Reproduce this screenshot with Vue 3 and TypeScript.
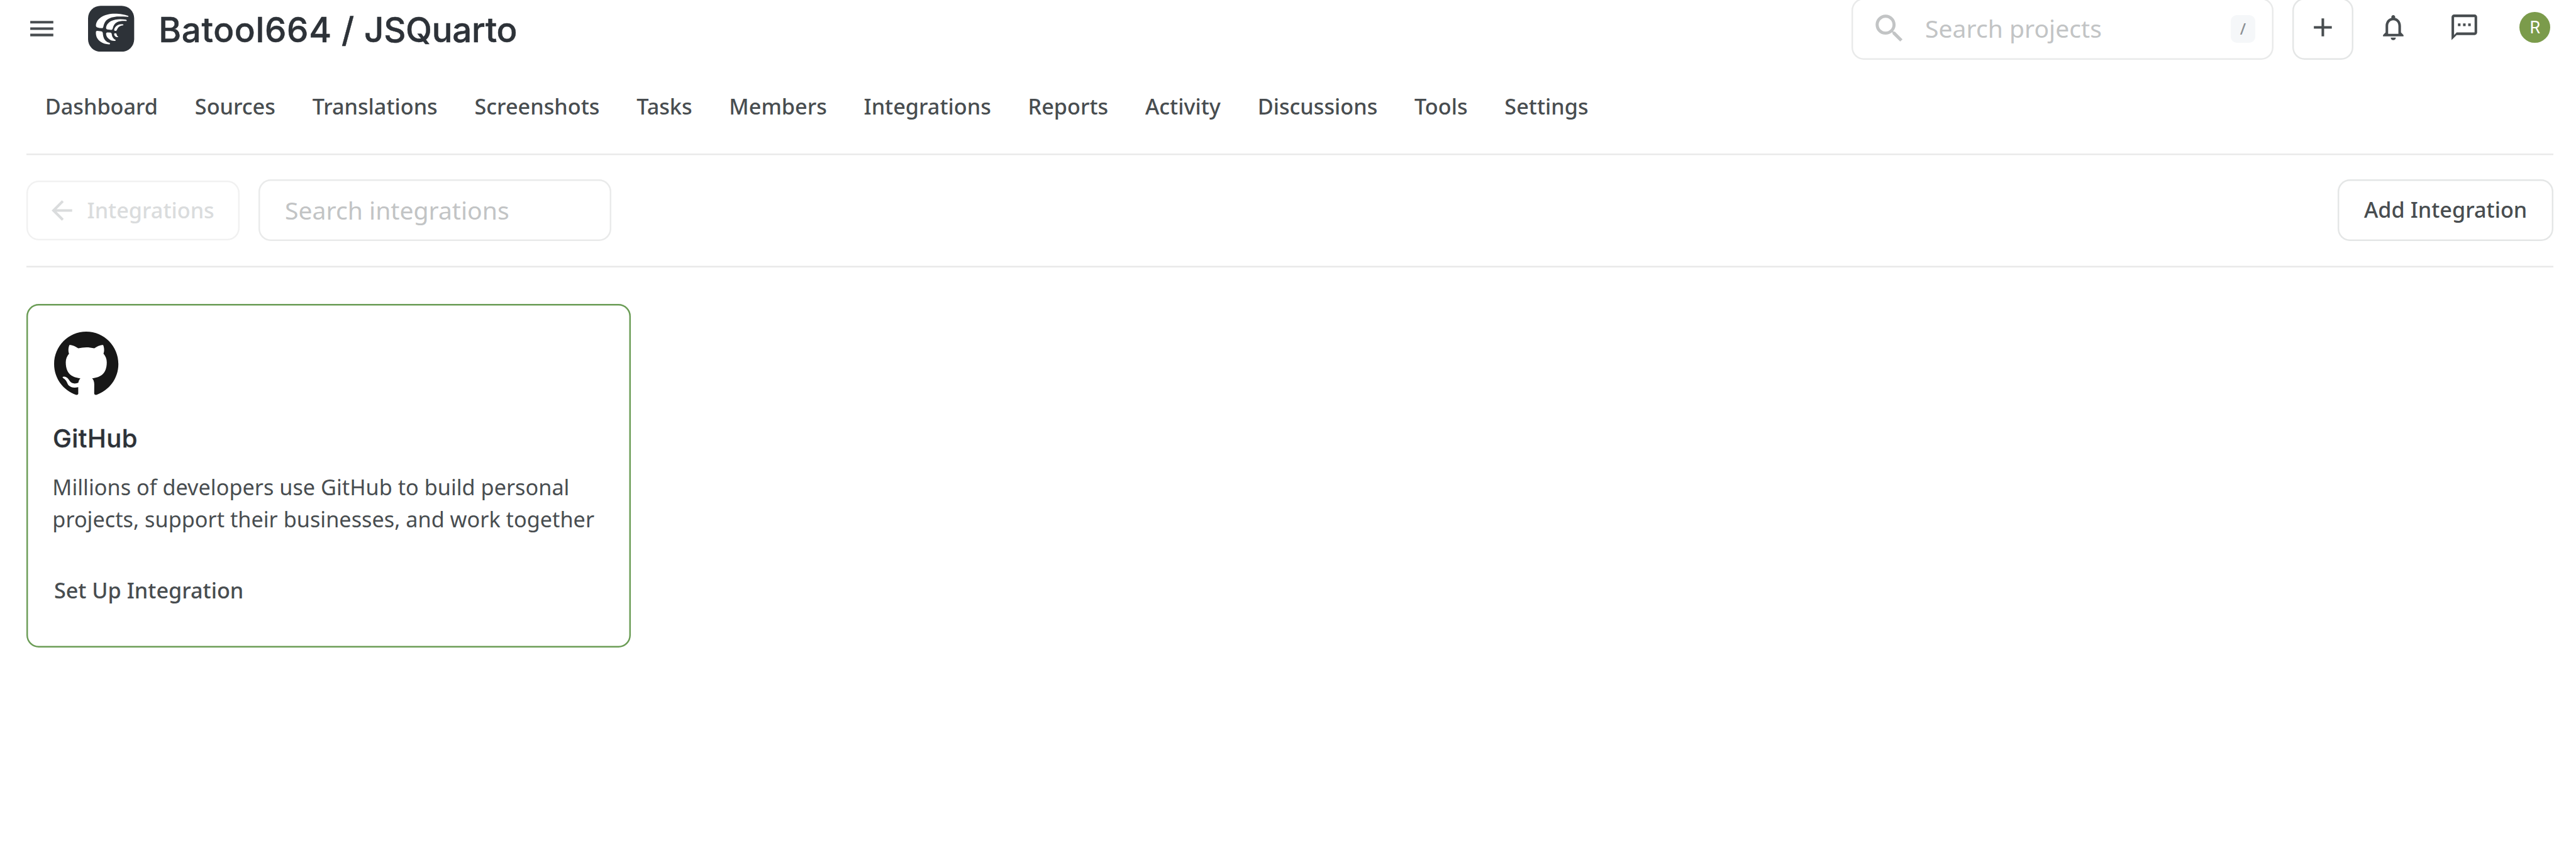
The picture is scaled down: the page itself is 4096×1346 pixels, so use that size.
<script setup lang="ts">
const tabs: string[] = [
  'Dashboard', 'Sources', 'Translations', 'Screenshots', 'Tasks', 'Members',
  'Integrations', 'Reports', 'Activity', 'Discussions', 'Tools', 'Settings',
]
</script>

<template>
  <div class="page">
    <header class="header">
      <svg class="icon menu" viewBox="0 0 24 24"><path d="M3 18h18v-2H3v2zm0-5h18v-2H3v2zm0-7v2h18V6H3z" /></svg>
      <svg class="logo" viewBox="66 33 269 268">
        <rect x="66" y="33" width="269" height="268" rx="73" fill="#2d3238" />
        <g fill="#fff">
          <path d="M112 150C112 133 121 114 140 101C162 86 192 79 222 79C252 79 280 85 299 91Q305 95 300 98C280 97 262 96 245 96C215 96 188 104 173 118C163 128 158 141 155 156Q153 164 147 164Q132 164 119 159Q112 157 112 150Z" />
          <path d="M112 185Q113 178 120 179L143 182Q151 183 152 191C153 208 156 222 166 234C173 242 182 247 191 249Q198 254 192 258C172 259 152 253 136 241C119 228 110 208 112 185Z" />
          <path d="M171 162C172 147 183 131 200 122C225 109 260 109 288 114Q295 119 289 122C268 121 249 122 235 129C221 136 214 149 210 165Q208 173 202 174L178 171Q171 170 171 162Z" />
          <path d="M171 195Q172 188 179 188L197 189Q203 190 204 197C205 209 209 219 217 226Q222 230 227 232Q229 236 223 238C209 239 196 234 186 225C176 217 171 206 171 195Z" />
          <path d="M218 173C219 162 228 150 242 144C251 141 261 140 271 142Q275 145 270 147C255 149 245 155 240 163C237 168 235 173 232 177Q231 179 227 179L222 179Q218 178 218 173Z" />
          <path d="M218 199Q218 193 223 193L229 194Q232 195 233 200C234 206 237 210 242 213Q243 217 238 216C227 216 219 209 218 199Z" />
        </g>
      </svg>
      <h1 class="title">Batool664 / <span class="project">JSQuarto</span></h1>
      <div class="box project-search">
        <svg class="glass" viewBox="0 0 24 24"><path d="M15.5 14h-.79l-.28-.27C15.41 12.59 16 11.11 16 9.5 16 5.91 13.09 3 9.5 3S3 5.91 3 9.5 5.91 16 9.5 16c1.61 0 3.09-.59 4.23-1.57l.27.28v.79l5 4.99L20.49 19l-4.99-5zm-6 0C7.01 14 5 11.99 5 9.5S7.01 5 9.5 5 14 7.01 14 9.5 11.99 14 9.5 14z" /></svg>
        <span class="hint">Search projects</span>
        <span class="kbd">/</span>
      </div>
      <div class="box add">
        <svg class="icon" viewBox="0 0 24 24"><path d="M19 13h-6v6h-2v-6H5v-2h6V5h2v6h6v2z" /></svg>
      </div>
      <div class="tools">
        <svg class="icon" viewBox="0 0 24 24"><path d="M12 22c1.1 0 2-.9 2-2h-4c0 1.1.9 2 2 2zm6-6v-5c0-3.07-1.63-5.64-4.5-6.32V4c0-.83-.67-1.5-1.5-1.5s-1.5.67-1.5 1.5v.68C7.64 5.36 6 7.92 6 11v5l-2 2v1h16v-1l-2-2zm-2 1H8v-6c0-2.48 1.51-4.5 4-4.5s4 2.02 4 4.5v6z" /></svg>
        <svg class="icon" viewBox="0 0 24 24"><path d="M20 2H4c-1.1 0-2 .9-2 2v18l4-4h14c1.1 0 2-.9 2-2V4c0-1.1-.9-2-2-2zm0 14H6l-2 2V4h16v12zM7 9h2v2H7zm4 0h2v2h-2zm4 0h2v2h-2z" /></svg>
        <span class="avatar">R</span>
      </div>
    </header>

    <nav class="nav">
      <a v-for="tab in tabs" :key="tab" class="tab">{{ tab }}</a>
    </nav>

    <section class="toolbar">
      <div class="box back">
        <svg class="icon" viewBox="0 0 24 24"><path d="M20 11H7.83l5.59-5.59L12 4l-8 8 8 8 1.41-1.41L7.83 13H20v-2z" /></svg>
        <span>Integrations</span>
      </div>
      <div class="box filter"><span class="hint">Search integrations</span></div>
      <button class="box add-integration">Add Integration</button>
    </section>

    <main>
      <article class="card">
        <svg class="github" viewBox="0 0 98 96"><path fill-rule="evenodd" clip-rule="evenodd" d="M48.854 0C21.839 0 0 22 0 49.217c0 21.756 13.993 40.172 33.405 46.69 2.427.49 3.316-1.059 3.316-2.362 0-1.141-.08-5.052-.08-9.127-13.59 2.934-16.42-5.867-16.42-5.867-2.184-5.704-5.42-7.17-5.42-7.17-4.448-3.015.324-3.015.324-3.015 4.934.326 7.523 5.052 7.523 5.052 4.367 7.496 11.404 5.378 14.235 4.074.404-3.178 1.699-5.378 3.074-6.6-10.839-1.141-22.243-5.378-22.243-24.283 0-5.378 1.94-9.778 5.014-13.2-.485-1.222-2.184-6.275.486-13.038 0 0 4.125-1.304 13.426 5.052a46.97 46.97 0 0 1 12.214-1.63c4.125 0 8.33.571 12.213 1.63 9.302-6.356 13.427-5.052 13.427-5.052 2.67 6.763.97 11.816.485 13.038 3.155 3.422 5.015 7.822 5.015 13.2 0 18.905-11.404 23.06-22.324 24.283 1.78 1.548 3.316 4.481 3.316 9.126 0 6.6-.08 11.897-.08 13.526 0 1.304.89 2.853 3.316 2.364 19.412-6.52 33.405-24.935 33.405-46.691C97.707 22 75.788 0 48.854 0z" /></svg>
        <h2 class="name">GitHub</h2>
        <p class="desc">Millions of developers use GitHub to build personal<br />projects, support their businesses, and work together</p>
        <a class="setup">Set Up Integration</a>
      </article>
    </main>
  </div>
</template>

<style>
/* 1rem is ten design pixels of the 5026-pixel-wide layout */
html {
  font-size: 8.14962px;
}
body {
  margin: 0;
  background: #fff;
}
</style>

<style scoped>
.page {
  box-sizing: border-box;
  width: 502.6rem;
  height: 165.2rem;
  padding: 0 4.4rem 0 5.2rem;
  overflow: hidden;
  background: #fff;
  color: #484d50;
  font-family: 'Noto Sans', sans-serif;
  font-size: 4.2rem;
  font-weight: 500;
}
.header {
  display: flex;
  align-items: center;
  height: 12rem;
  margin-top: -0.4rem;
}
svg {
  display: block;
  flex: none;
  fill: currentColor;
}
.icon {
  width: 6rem;
  height: 6rem;
}
.logo {
  width: 9rem;
  height: 9rem;
  margin-left: 6rem;
}
.title {
  margin: 0 auto 0 4.75rem;
  padding-top: 0.6rem;
  color: #2d3238;
  font-family: Inter, sans-serif;
  font-size: 6.7rem;
  font-weight: 500;
  line-height: 8rem;
  letter-spacing: 0.085rem;
  white-space: nowrap;
  -webkit-text-stroke: 0.06rem currentColor;
}
.project {
  letter-spacing: -0.035rem;
}
/* outlines are inset shadows so that fractional widths are kept */
.box {
  --line: #e9eaea;
  box-sizing: border-box;
  display: flex;
  align-items: center;
  height: 12rem;
  border: 0;
  border-radius: 2.4rem;
  background: #fff;
  box-shadow: inset 0 0 0 0.3rem var(--line);
  white-space: nowrap;
}
.hint {
  padding-bottom: 0.2rem;
  color: #c2c4c5;
  font-size: 4.8rem;
  font-weight: 400;
}
.project-search {
  width: 82.4rem;
  padding: 0 3.6rem 0 3.8rem;
}
.glass {
  width: 7.2rem;
  height: 7.2rem;
  margin-right: 3.4rem;
  color: #c2c4c5;
}
.kbd {
  width: 4.8rem;
  height: 5.4rem;
  margin-left: auto;
  border-radius: 1.2rem;
  background: #f5f7f9;
  color: #8b8f93;
  font-size: 3rem;
  line-height: 5.4rem;
  text-align: center;
}
.add {
  --line: #e4e6e6;
  justify-content: center;
  width: 12rem;
  margin-left: 3.6rem;
  padding-bottom: 0.6rem;
}
.tools {
  display: flex;
  align-items: center;
  gap: 7.8rem;
  padding: 0 0.6rem 0.6rem 4.8rem;
}
.avatar {
  width: 6rem;
  height: 6rem;
  border-radius: 50%;
  background: #7b9b4b;
  color: #fff;
  font-family: Roboto, sans-serif;
  font-size: 3.3rem;
  font-weight: 400;
  line-height: 6.25rem;
  text-align: center;
}
.nav {
  box-sizing: border-box;
  display: flex;
  align-items: center;
  gap: 7.21rem;
  height: 18.3rem;
  padding-left: 3.6rem;
}
.tab {
  line-height: 6rem;
}
.toolbar {
  display: flex;
  align-items: center;
  height: 22.2rem;
  box-shadow: inset 0 0.3rem #e9e9e9, inset 0 -0.3rem #e9e9e9;
}
.back {
  --line: #f1f1f1;
  width: 41.6rem;
  height: 11.7rem;
  margin-top: 0.1rem;
  padding: 0 0 0.15rem 3.9rem;
  color: #dadcdd;
}
.back .icon {
  margin: 0.15rem 1.9rem 0 0;
}
.filter {
  width: 68.8rem;
  margin-left: 3.65rem;
  padding-left: 5.15rem;
}
.add-integration {
  --line: #e4e6e6;
  justify-content: center;
  width: 42.1rem;
  margin-left: auto;
  padding: 0 0 0.3rem;
  color: inherit;
  font: inherit;
}
.card {
  box-sizing: border-box;
  width: 117.9rem;
  height: 67rem;
  margin-top: 7.2rem;
  padding: 5.4rem 4.98rem 0;
  border-radius: 2.4rem;
  box-shadow: inset 0 0 0 0.3rem #6a9c55;
}
.github {
  width: 12.6rem;
  height: 12.33rem;
  margin-left: 0.42rem;
  color: #171717;
}
.name {
  margin: 5.52rem 0 0 0.12rem;
  color: #2d3238;
  font-family: Inter, sans-serif;
  font-size: 4.9rem;
  font-weight: 500;
  line-height: 6rem;
  letter-spacing: 0.06rem;
  -webkit-text-stroke: 0.05rem currentColor;
}
.desc {
  margin: 3.2rem 0 0 0.05rem;
  font-weight: 400;
  line-height: 6.3rem;
  letter-spacing: 0.002rem;
  white-space: nowrap;
}
.setup {
  display: block;
  margin: 7.84rem 0 0 0.36rem;
  line-height: 6rem;
}
</style>
